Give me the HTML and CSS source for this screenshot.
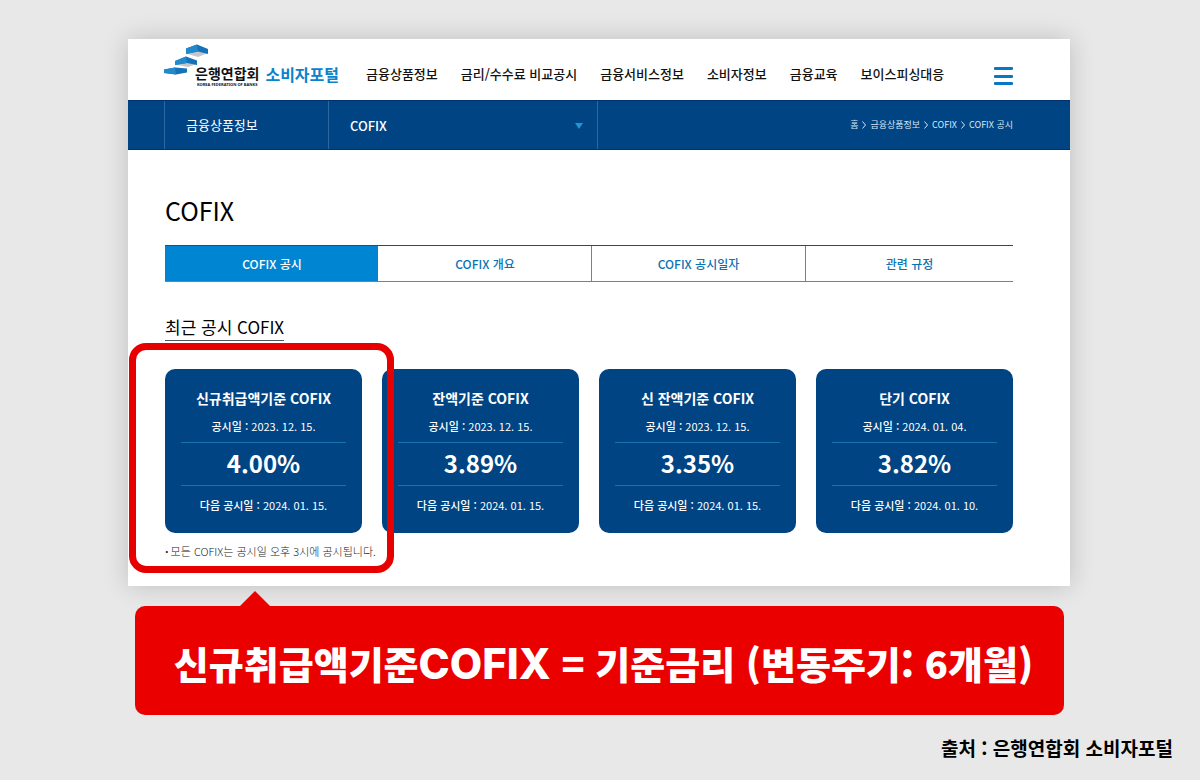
FILE: index.html
```html
<!DOCTYPE html>
<html lang="ko">
<head>
<meta charset="utf-8">
<meta name="viewport" content="width=device-width, initial-scale=1">
<title>COFIX 공시</title>
<link rel="stylesheet" href="styles.css">
</head>
<body>
<main class="stage">
  <section class="panel">
    <header class="header">
      <a class="logo" href="#">
        <svg class="logo-mark" viewBox="0 0 44 32" aria-hidden="true">
          <path d="M22 9.500 33 6 44 9 34 13z" fill="#c4c6ca"/>
          <path d="M22 4.500 33 .5 44 5v5L34 7.500 22 10z" fill="#1672b8"/>
          <path d="M22 4.500 33 .5 34 7.500 22 10z" fill="#2389cd"/>
          <path d="M11 20.500 22 18 33 20 24 23z" fill="#c4c6ca"/>
          <path d="M11 17 22 12.500 33 16.500V21L23 19l-12 2z" fill="#1672b8"/>
          <path d="M11 17 22 12.500 23 19l-12 2z" fill="#2389cd"/>
          <path d="M0 25.500 11 23.500 23 24.500v4L12 30.500 0 29z" fill="#1672b8"/>
          <path d="M0 25.500 11 23.500 12 30.500 0 29z" fill="#2389cd"/>
        </svg>
        <span class="logo-name">은행연합회<small class="logo-sub">KOREA FEDERATION OF BANKS</small></span>
        <span class="logo-portal">소비자포털</span>
      </a>
      <nav class="menu">
        <a href="#">금융상품정보</a>
        <a href="#">금리/수수료 비교공시</a>
        <a href="#">금융서비스정보</a>
        <a href="#">소비자정보</a>
        <a href="#">금융교육</a>
        <a href="#">보이스피싱대응</a>
      </nav>
      <button class="burger" type="button" aria-label="전체 메뉴"><i></i><i></i><i></i></button>
    </header>

    <div class="subbar">
      <a class="subbar-section" href="#">금융상품정보</a>
      <div class="subbar-pick">
        <select class="subbar-select" aria-label="하위 메뉴"><option>COFIX</option></select>
        <svg class="subbar-arrow" viewBox="0 0 8 6" aria-hidden="true"><path d="M0 0h8L4 6z"/></svg>
      </div>
      <nav class="crumbs" aria-label="현재 위치">
        <a href="#">홈</a>
        <svg viewBox="0 0 4 8" aria-hidden="true"><path d="M.5.5 3.500 4 .5 7.500"/></svg>
        <a href="#">금융상품정보</a>
        <svg viewBox="0 0 4 8" aria-hidden="true"><path d="M.5.5 3.500 4 .5 7.500"/></svg>
        <a href="#">COFIX</a>
        <svg viewBox="0 0 4 8" aria-hidden="true"><path d="M.5.5 3.500 4 .5 7.500"/></svg>
        <a href="#">COFIX 공시</a>
      </nav>
    </div>

    <div class="content">
      <h1 class="title">COFIX</h1>
      <nav class="tabs">
        <a class="tab tab-active" href="#">COFIX 공시</a>
        <a class="tab" href="#">COFIX 개요</a>
        <a class="tab" href="#">COFIX 공시일자</a>
        <a class="tab" href="#">관련 규정</a>
      </nav>
      <h2 class="subtitle">최근 공시 COFIX</h2>
      <div class="cards">
        <div class="slot">
          <article class="card">
            <h3 class="card-name">신규취급액기준 COFIX</h3>
            <p class="card-date"><b>공시일 :</b> 2023. 12. 15.</p>
            <p class="card-rate">4.00%</p>
            <p class="card-next"><b>다음 공시일 :</b> 2024. 01. 15.</p>
          </article>
          <div class="highlight"></div>
        </div>
        <article class="card">
          <h3 class="card-name">잔액기준 COFIX</h3>
          <p class="card-date"><b>공시일 :</b> 2023. 12. 15.</p>
          <p class="card-rate">3.89%</p>
          <p class="card-next"><b>다음 공시일 :</b> 2024. 01. 15.</p>
        </article>
        <article class="card">
          <h3 class="card-name">신 잔액기준 COFIX</h3>
          <p class="card-date"><b>공시일 :</b> 2023. 12. 15.</p>
          <p class="card-rate">3.35%</p>
          <p class="card-next"><b>다음 공시일 :</b> 2024. 01. 15.</p>
        </article>
        <article class="card">
          <h3 class="card-name">단기 COFIX</h3>
          <p class="card-date"><b>공시일 :</b> 2024. 01. 04.</p>
          <p class="card-rate">3.82%</p>
          <p class="card-next"><b>다음 공시일 :</b> 2024. 01. 10.</p>
        </article>
      </div>
      <p class="note">모든 COFIX는 공시일 오후 3시에 공시됩니다.</p>
    </div>
  </section>

  <p class="callout">신규취급액기준<span class="latin">COFIX</span> = 기준금리 (변동주기: 6개월)</p>
</main>
<footer class="source">출처 : 은행연합회 소비자포털</footer>
</body>
</html>
```
FILE: styles.css
```css
* { box-sizing: border-box; }

body {
  margin: 0;
  background: #e8e8e8;
  color: #111;
  font-family: "Noto Sans CJK KR", sans-serif;
  font-size: 13px;
  line-height: 20px;
}

h1, h2, h3, p { margin: 0; font-weight: 500; }
a { color: inherit; text-decoration: none; white-space: nowrap; }

.stage { padding: 39px 130px 0 128px; }

.panel {
  background: #fff;
  box-shadow: 0 0 24px rgba(0, 0, 0, .18);
}

.header {
  display: flex;
  align-items: flex-start;
  height: 61px;
  padding: 5px 57px 0 36px;
}

.logo { display: flex; align-items: flex-start; }
.logo-mark { width: 44px; height: 32px; margin-right: -13px; }
.logo-name {
  display: flex;
  flex-direction: column;
  margin-top: 20px;
  font-size: 14px;
  font-weight: 700;
  line-height: 18px;
}
.logo-sub {
  font: 700 4px/5px "Noto Sans", sans-serif;
  padding-left: 2px;
}
.logo-portal {
  margin: 20px 0 0 6px;
  color: #0b83cc;
  font-size: 16px;
  font-weight: 700;
}

.menu {
  display: flex;
  gap: 23px;
  margin: 20px 0 0 27px;
  font-weight: 500;
}

.burger {
  display: flex;
  flex-direction: column;
  justify-content: space-between;
  width: 19px;
  height: 18px;
  margin: 23px 0 0 auto;
  padding: 0;
  border: 0;
  background: none;
}
.burger i { height: 3px; border-radius: 1px; background: #0878c4; }

.subbar {
  display: flex;
  align-items: stretch;
  height: 50px;
  padding: 0 57px 0 36px;
  border-top: 1px solid #003270;
  border-bottom: 1px solid #003270;
  background: #004483;
  color: #fff;
}
.subbar-section {
  width: 164px;
  padding: 14px 21px;
  border-left: 1px solid #2a689f;
}
.subbar-pick {
  position: relative;
  width: 270px;
  border-left: 1px solid #2a689f;
  border-right: 1px solid #2a689f;
}
.subbar-select {
  width: 100%;
  height: 100%;
  padding: 0 21px;
  border: 0;
  appearance: none;
  background: none;
  color: #fff;
  font: 500 13px "Noto Sans CJK KR", sans-serif;
}
.subbar-arrow {
  position: absolute;
  top: 22px;
  right: 14px;
  width: 8px;
  height: 6px;
  fill: #2196cf;
}
.crumbs {
  display: flex;
  align-items: center;
  gap: 4px;
  margin-left: auto;
  color: #d4e7f7;
  font-size: 9px;
}
.crumbs svg { width: 4px; height: 8px; fill: none; stroke: #d4e7f7; }

.content { padding: 43px 57px 25px 37px; }

.title { font-size: 25px; font-weight: 400; line-height: 34px; color: #000; }

.tabs {
  display: grid;
  grid-template-columns: 213fr 213fr 214fr 208fr;
  margin-top: 18px;
  border-top: 1px solid #07558a;
  border-bottom: 1px solid #3b93c6;
}
.tab {
  padding: 8px 0 7px;
  border-left: 1px solid #3b93c6;
  color: #0b73b3;
  font-size: 12px;
  font-weight: 500;
  text-align: center;
}
.tab-active { border-color: #0085d2; background: #0085d2; color: #fff; }
.tab-active + .tab { border-color: transparent; }

.subtitle {
  display: table;
  margin-top: 32px;
  border-bottom: 1px solid #555;
  color: #000;
  font-size: 17px;
  font-weight: 400;
  line-height: 26px;
}

.cards {
  display: grid;
  grid-template-columns: repeat(4, 1fr);
  gap: 20px;
  margin-top: 28px;
}
.slot { position: relative; }
.card {
  padding: 19px 16px 18px;
  border-radius: 10px;
  background: #004483;
  color: #fff;
  text-align: center;
  white-space: nowrap;
}
.card-name { font-size: 14px; font-weight: 700; }
.card-date { padding: 8px 0 6px; font-size: 11px; font-weight: 400; }
.card-rate {
  padding-bottom: 2px;
  border-top: 1px solid #1873ad;
  border-bottom: 1px solid #1873ad;
  font-size: 24px;
  font-weight: 700;
  line-height: 40px;
}
.card-next { padding-top: 9px; font-size: 11px; font-weight: 400; }
.card b { font-weight: 500; }

.highlight {
  position: absolute;
  inset: -26px -32px -40px -36px;
  border: 7px solid #e60000;
  border-radius: 17px;
}

.note { margin-top: 8px; color: #222; font-size: 11px; font-weight: 300; }
.note::before { content: "·"; margin-right: 2px; font-weight: 700; }

.callout {
  position: relative;
  margin: 20px 6px 0 7px;
  padding: 32px 12px 26px 20px;
  border-radius: 10px;
  background: #eb0000;
  color: #fff;
  font-size: 38px;
  font-weight: 900;
  line-height: 50px;
  text-align: center;
  white-space: nowrap;
}
.callout::before {
  content: "";
  position: absolute;
  top: -15px;
  left: 104px;
  border: 16px solid transparent;
  border-top: 0;
  border-bottom-color: #eb0000;
}
.latin { font-family: Inter, sans-serif; font-size: 42px; font-weight: 800; }

.source {
  padding: 19px 27px 0 0;
  color: #000;
  font-size: 19px;
  font-weight: 700;
  line-height: 28px;
  text-align: right;
}
```
